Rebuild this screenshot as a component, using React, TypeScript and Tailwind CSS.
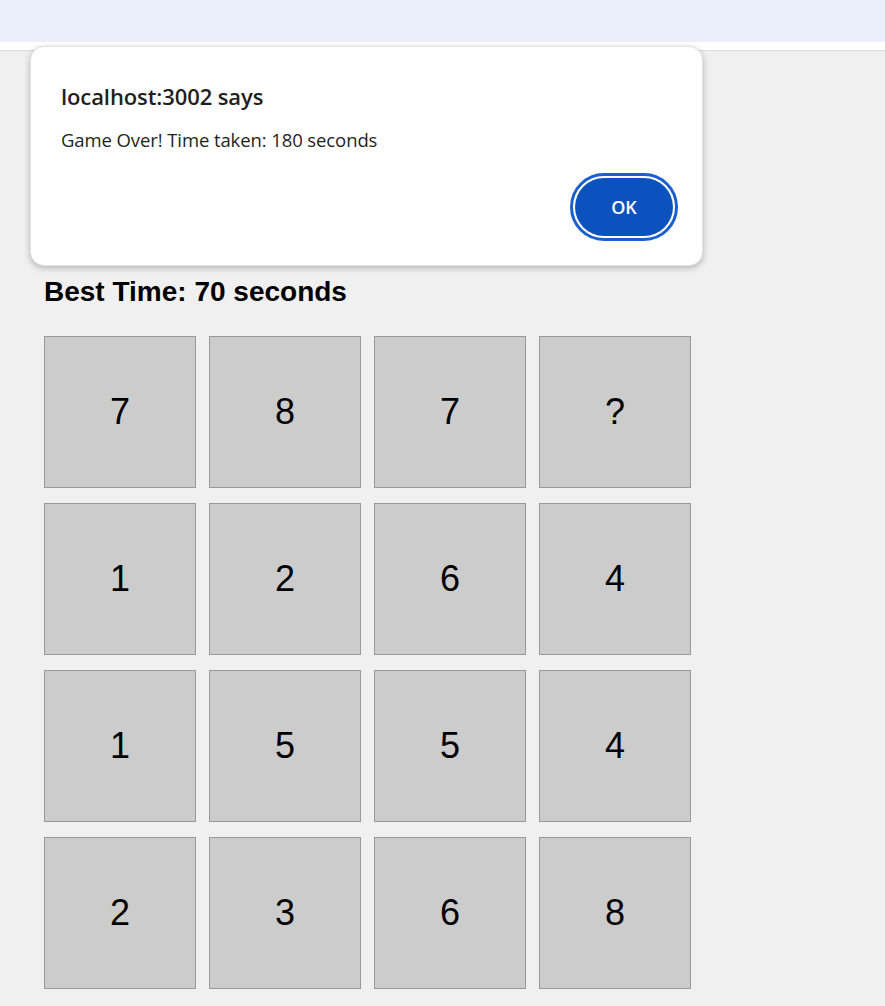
const cards = ['7', '8', '7', '?', '1', '2', '6', '4', '1', '5', '5', '4', '2', '3', '6', '8']

const Card: React.FC<{ value: string }> = ({ value }) => (
  <div className="w-[152px] h-[152px] bg-[#cccccc] border border-[#999999] flex items-center justify-center text-[36px] text-black">
    {value}
  </div>
)

const AlertDialog: React.FC = () => (
  <div className="absolute left-[30px] top-[46px] w-[673px] h-[220px] bg-white rounded-[14px] border border-[#e2e2e2] shadow-[0_2px_6px_rgba(0,0,0,0.25)] px-[30px] pt-[34px] font-['Open_Sans','Noto_Sans',sans-serif] text-[#1f1f1f]">
    <div className="text-[22px] font-semibold leading-[30px] tracking-[-0.1px]">localhost:3002 says</div>
    <div className="text-[18.5px] leading-[26px] mt-[16px] tracking-[-0.1px]">Game Over! Time taken: 180 seconds</div>
    <div className="flex justify-end mt-[20px] mr-[-6px]">
      <div className="rounded-full border-[3px] border-[#1b5fcf] p-[2px]">
        <button className="w-[98px] h-[58px] rounded-full bg-[#0b52bf] text-white text-[18px] font-semibold">
          OK
        </button>
      </div>
    </div>
  </div>
)

export default function App() {
  return (
    <div className="relative min-h-[1006px] bg-[#f0f0f0] font-['Liberation_Sans',Arial,sans-serif]">
      <div className="h-[42px] bg-[#ebeff9]" />
      <div className="h-[9px] bg-white border-b border-[#dddddd]" />
      <div className="pl-[44px] pt-[225px] pb-[17px]">
        <h2 className="text-[28px] font-bold leading-[32px] text-black">Best Time: 70 seconds</h2>
        <div className="mt-[28px] grid grid-cols-[repeat(4,152px)] gap-x-[13px] gap-y-[15px]">
          {cards.map((c, i) => (
            <Card key={i} value={c} />
          ))}
        </div>
      </div>
      <AlertDialog />
    </div>
  )
}
